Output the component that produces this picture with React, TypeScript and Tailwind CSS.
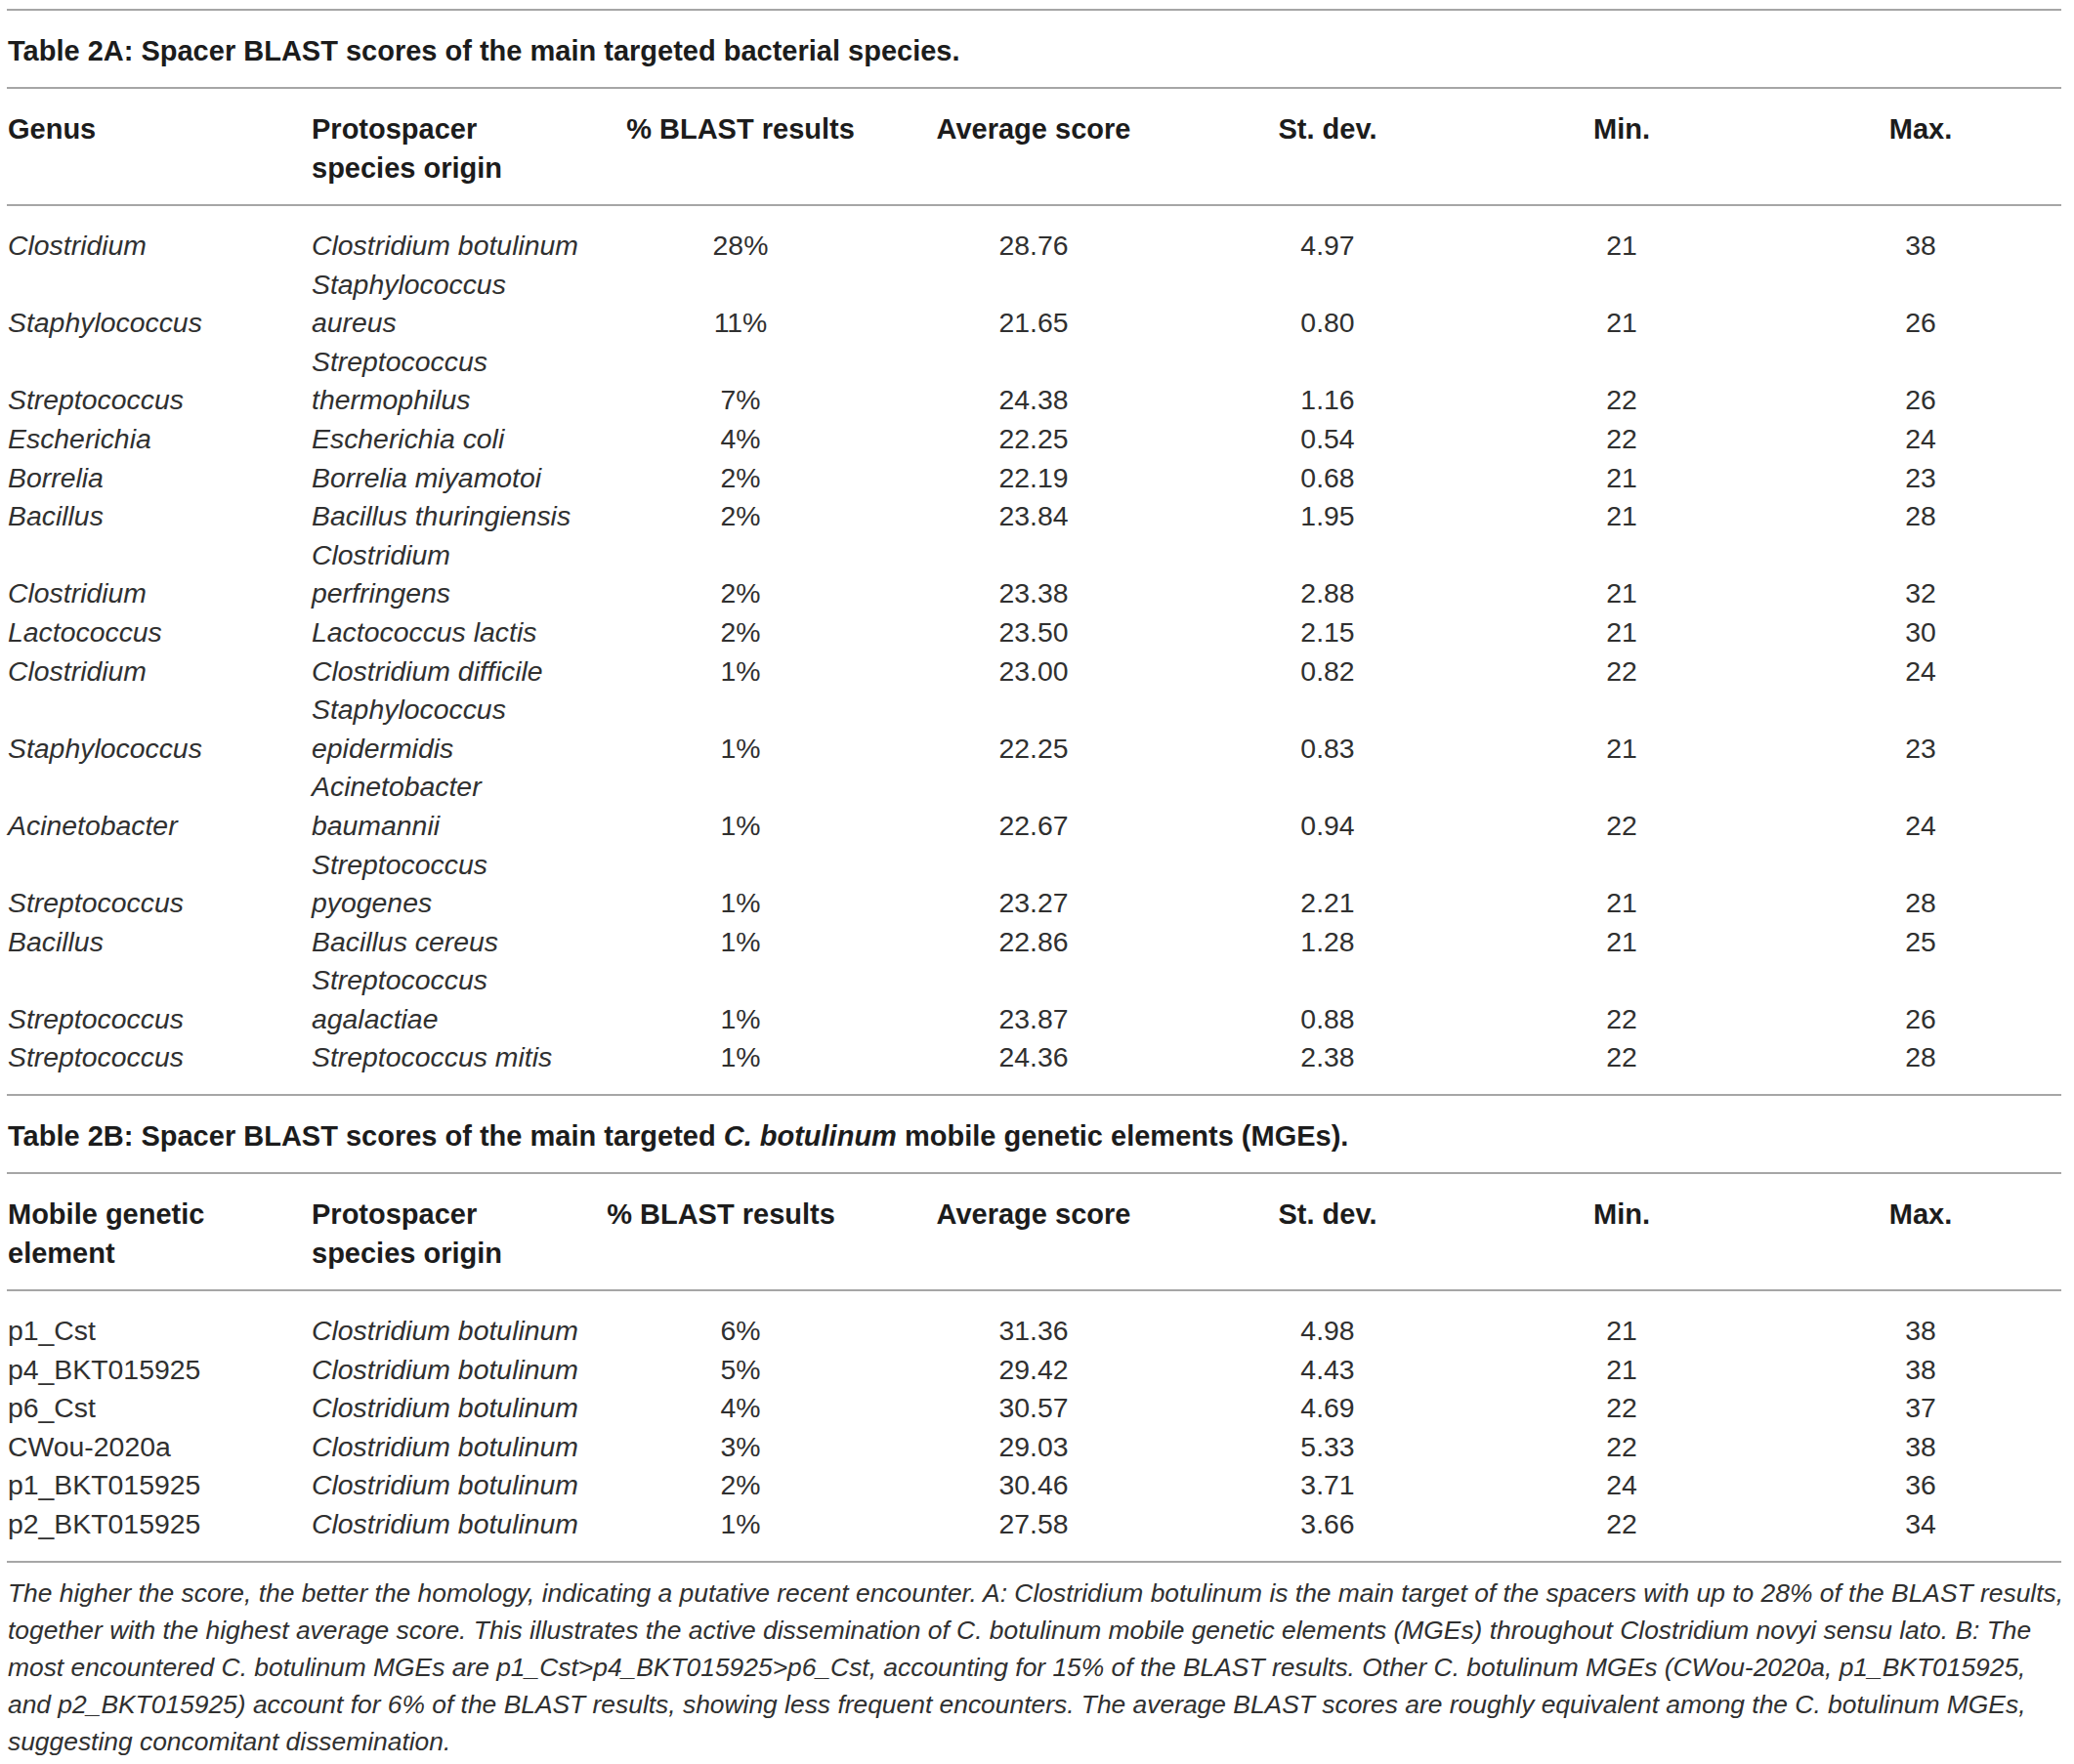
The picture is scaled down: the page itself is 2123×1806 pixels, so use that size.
type Row = {
  name: string;
  species: string[];
  pct: string;
  avg: string;
  sd: string;
  min: string;
  max: string;
};

const bacterial: Row[] = [
  { name: "Clostridium", species: ["Clostridium botulinum"], pct: "28%", avg: "28.76", sd: "4.97", min: "21", max: "38" },
  { name: "Staphylococcus", species: ["Staphylococcus", "aureus"], pct: "11%", avg: "21.65", sd: "0.80", min: "21", max: "26" },
  { name: "Streptococcus", species: ["Streptococcus", "thermophilus"], pct: "7%", avg: "24.38", sd: "1.16", min: "22", max: "26" },
  { name: "Escherichia", species: ["Escherichia coli"], pct: "4%", avg: "22.25", sd: "0.54", min: "22", max: "24" },
  { name: "Borrelia", species: ["Borrelia miyamotoi"], pct: "2%", avg: "22.19", sd: "0.68", min: "21", max: "23" },
  { name: "Bacillus", species: ["Bacillus thuringiensis"], pct: "2%", avg: "23.84", sd: "1.95", min: "21", max: "28" },
  { name: "Clostridium", species: ["Clostridium", "perfringens"], pct: "2%", avg: "23.38", sd: "2.88", min: "21", max: "32" },
  { name: "Lactococcus", species: ["Lactococcus lactis"], pct: "2%", avg: "23.50", sd: "2.15", min: "21", max: "30" },
  { name: "Clostridium", species: ["Clostridium difficile"], pct: "1%", avg: "23.00", sd: "0.82", min: "22", max: "24" },
  { name: "Staphylococcus", species: ["Staphylococcus", "epidermidis"], pct: "1%", avg: "22.25", sd: "0.83", min: "21", max: "23" },
  { name: "Acinetobacter", species: ["Acinetobacter", "baumannii"], pct: "1%", avg: "22.67", sd: "0.94", min: "22", max: "24" },
  { name: "Streptococcus", species: ["Streptococcus", "pyogenes"], pct: "1%", avg: "23.27", sd: "2.21", min: "21", max: "28" },
  { name: "Bacillus", species: ["Bacillus cereus"], pct: "1%", avg: "22.86", sd: "1.28", min: "21", max: "25" },
  { name: "Streptococcus", species: ["Streptococcus", "agalactiae"], pct: "1%", avg: "23.87", sd: "0.88", min: "22", max: "26" },
  { name: "Streptococcus", species: ["Streptococcus mitis"], pct: "1%", avg: "24.36", sd: "2.38", min: "22", max: "28" },
];

const mges: Row[] = [
  { name: "p1_Cst", species: ["Clostridium botulinum"], pct: "6%", avg: "31.36", sd: "4.98", min: "21", max: "38" },
  { name: "p4_BKT015925", species: ["Clostridium botulinum"], pct: "5%", avg: "29.42", sd: "4.43", min: "21", max: "38" },
  { name: "p6_Cst", species: ["Clostridium botulinum"], pct: "4%", avg: "30.57", sd: "4.69", min: "22", max: "37" },
  { name: "CWou-2020a", species: ["Clostridium botulinum"], pct: "3%", avg: "29.03", sd: "5.33", min: "22", max: "38" },
  { name: "p1_BKT015925", species: ["Clostridium botulinum"], pct: "2%", avg: "30.46", sd: "3.71", min: "24", max: "36" },
  { name: "p2_BKT015925", species: ["Clostridium botulinum"], pct: "1%", avg: "27.58", sd: "3.66", min: "22", max: "34" },
];

const cols = "grid grid-cols-[311px_289px_300px_300px_302px_300px_312px] pl-[8px]";

function Rule() {
  return <div className="ml-[7px] h-[2px] w-[2103px] bg-[#a6a6a6]" />;
}

function Header({ first, pctShift }: { first: string[]; pctShift?: boolean }) {
  return (
    <div className={`${cols} pt-[21px] pb-[17px] text-[29px] font-bold leading-[40px] text-[#1c1c1c]`}>
      <div className="whitespace-nowrap">
        {first.map((l) => (
          <div key={l}>{l}</div>
        ))}
      </div>
      <div className="whitespace-nowrap">
        <div>Protospacer</div>
        <div>species origin</div>
      </div>
      <div className={`text-center whitespace-nowrap ${pctShift ? "pr-[40px]" : ""}`}>% BLAST results</div>
      <div className="text-center whitespace-nowrap">Average score</div>
      <div className="text-center whitespace-nowrap">St. dev.</div>
      <div className="text-center whitespace-nowrap">Min.</div>
      <div className="text-center whitespace-nowrap">Max.</div>
    </div>
  );
}

function Body({ rows, italicName }: { rows: Row[]; italicName: boolean }) {
  return (
    <div className="pt-[21px] pb-[17px] text-[28.4px] leading-[39.6px] text-[#303030]">
      {rows.map((r, i) => (
        <div key={i} className={`${cols} items-end`}>
          <div className={`whitespace-nowrap ${italicName ? "italic" : ""}`}>{r.name}</div>
          <div className="whitespace-nowrap italic">
            {r.species.map((s) => (
              <div key={s}>{s}</div>
            ))}
          </div>
          <div className="text-center">{r.pct}</div>
          <div className="text-center">{r.avg}</div>
          <div className="text-center">{r.sd}</div>
          <div className="text-center">{r.min}</div>
          <div className="text-center">{r.max}</div>
        </div>
      ))}
    </div>
  );
}

export default function App() {
  return (
    <div
      className="min-h-screen w-[2123px] bg-white pt-[9px] text-[#303030]"
      style={{ fontFamily: '"Liberation Sans", Arial, sans-serif' }}
    >
      <Rule />
      <div className="pl-[8px] pt-[21px] pb-[17px] text-[29px] font-bold leading-[40px] whitespace-nowrap text-[#1c1c1c]">
        Table 2A: Spacer BLAST scores of the main targeted bacterial species.
      </div>
      <Rule />
      <Header first={["Genus"]} />
      <Rule />
      <Body rows={bacterial} italicName />
      <Rule />
      <div className="pl-[8px] pt-[21px] pb-[17px] text-[29px] font-bold leading-[40px] whitespace-nowrap text-[#1c1c1c]">
        Table 2B: Spacer BLAST scores of the main targeted <i>C. botulinum</i> mobile genetic elements (MGEs).
      </div>
      <Rule />
      <Header first={["Mobile genetic", "element"]} pctShift />
      <Rule />
      <Body rows={mges} italicName={false} />
      <Rule />
      <div className="pl-[8px] pt-[12px] text-[26.4px] italic leading-[38px] text-[#303030]">
        <div className="whitespace-nowrap">
          The higher the score, the better the homology, indicating a putative recent encounter. A: Clostridium botulinum is the main target of the spacers with up to 28% of the BLAST results,
        </div>
        <div className="whitespace-nowrap">
          together with the highest average score. This illustrates the active dissemination of C. botulinum mobile genetic elements (MGEs) throughout Clostridium novyi sensu lato. B: The
        </div>
        <div className="whitespace-nowrap">
          most encountered C. botulinum MGEs are p1_Cst&gt;p4_BKT015925&gt;p6_Cst, accounting for 15% of the BLAST results. Other C. botulinum MGEs (CWou-2020a, p1_BKT015925,
        </div>
        <div className="whitespace-nowrap">
          and p2_BKT015925) account for 6% of the BLAST results, showing less frequent encounters. The average BLAST scores are roughly equivalent among the C. botulinum MGEs,
        </div>
        <div className="whitespace-nowrap">suggesting concomitant dissemination.</div>
      </div>
    </div>
  );
}
